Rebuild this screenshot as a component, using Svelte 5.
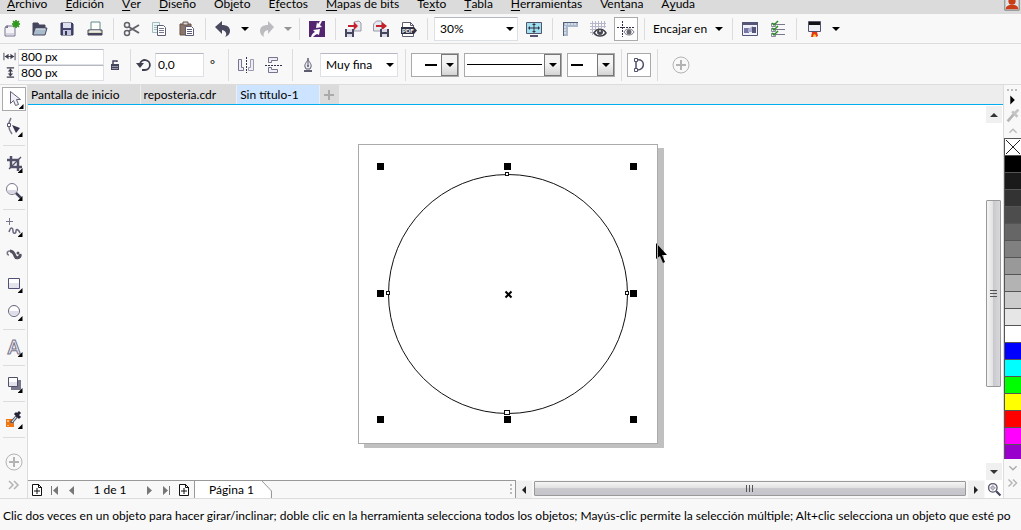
<script>
  let zoom = $state('30%')
  let outline = $state('Muy fina')
  let width = $state('800 px')
  let height = $state('800 px')
  let angle = $state('0,0')
  let tool = $state('pick')

  // label split around the underlined access key
  const menus = [
    ['', 'A', 'rchivo'],
    ['', 'E', 'dición'],
    ['', 'V', 'er'],
    ['', 'D', 'iseño'],
    ['Ob', 'j', 'eto'],
    ['E', 'f', 'ectos'],
    ['', 'M', 'apas de bits'],
    ['Te', 'x', 'to'],
    ['', 'T', 'abla'],
    ['', 'H', 'erramientas'],
    ['Ven', 't', 'ana'],
    ['A', 'y', 'uda'],
  ]

  const fileTools = [
    ['new', 'Nuevo'],
    ['open', 'Abrir'],
    ['save', 'Guardar'],
    ['print', 'Imprimir'],
    null,
    ['cut', 'Cortar'],
    ['copy', 'Copiar'],
    ['paste', 'Pegar'],
    null,
    ['undo', 'Deshacer', 'more'],
    ['redo', 'Rehacer', 'more off'],
    null,
    ['connect', 'Buscar contenido'],
    null,
    ['import', 'Importar'],
    ['export', 'Exportar'],
    ['pdf', 'Publicar en PDF'],
    null,
  ]

  const toolbox = [
    ['pick', 'Selección', true],
    ['shape', 'Forma', true],
    null,
    ['crop', 'Recortar', true],
    ['zoom', 'Zoom', true],
    null,
    ['freehand', 'Mano alzada', true],
    ['artistic', 'Medios artísticos', false],
    ['rect', 'Rectángulo', true],
    ['ellipse', 'Elipse', true],
    null,
    ['text', 'Texto', true],
    null,
    ['shadow', 'Sombra', true],
    null,
    ['dropper', 'Cuentagotas', true],
    null,
  ]

  const tabs = ['Pantalla de inicio', 'reposteria.cdr', 'Sin título-1']
  let activeTab = $state(2)

  const colors = [
    '#000000', '#1a1a1a', '#333333', '#4d4d4d', '#666666', '#808080', '#999999',
    '#b3b3b3', '#cccccc', '#e6e6e6', '#ffffff', '#0000ff', '#00ffff', '#00ff00',
    '#ffff00', '#ff0000', '#ff00ff', '#9900cc',
  ]

  const handles = [
    [22, 22], [149, 22], [275, 22],
    [22, 149], [275, 149],
    [22, 275], [149, 275], [275, 275],
  ]

  // every icon is drawn on a 20x20 grid
  const icons = {
    new: '<path d="M5 7h9v10H4V9z" fill="#f4f4f8" stroke="#77758c"/><path d="M4 9l3-3v3z" fill="#77758c"/><path d="M5 14h8v2H5z" fill="#d6d6e0"/><path d="M15 1l1 2 2-1-1 2 2 1-2 1 1 2-2-1-1 2-1-2-2 1 1-2-2-1 2-1-1-2 2 1z" fill="#2f9a1c" stroke="#2f9a1c"/>',
    open: '<path d="M4 16V4h5l1 2h6v3" fill="#46465f" stroke="#46465f"/><path d="M6 9h12l-2 7H4z" fill="#a9bccb" stroke="#46465f"/><path d="M7 10h9" stroke="#dce6ee"/>',
    save: '<path d="M4 4h11l1 1v11H4z" fill="#44446e" stroke="#343455"/><path d="M6 4h8v5H6z" fill="#dfe0f0"/><path d="M6 11h8v5H6z" fill="#c5c7dc"/><path d="M8 12h2v4H8z" fill="#343455"/>',
    print: '<path d="M6 3h9v8H6z" fill="#fff" stroke="#5e8c88"/><path d="M3 11h14v5H3z" fill="#dadbc4" stroke="#44445d"/><path d="M5 12h10" stroke="#fff"/><path d="M3 15h14" stroke="#44445d" stroke-width="2"/>',
    cut: '<path d="M8 8l10 6M8 12l10-6" fill="none" stroke="#62626b" stroke-width="2"/><circle cx="6" cy="6" r="2.5" fill="none" stroke="#62626b" stroke-width="1.5"/><circle cx="6" cy="14" r="2.5" fill="none" stroke="#62626b" stroke-width="1.5"/>',
    copy: '<path d="M3.500 3.500h7v10h-7z" fill="#edf5f5" stroke="#9ebdbd"/><path d="M5 6.500h4M5 8.500h4M5 10.500h4" stroke="#9ebdbd"/><path d="M8.500 6.500h6l2 2v8h-8z" fill="#fff" stroke="#5d5d77"/><path d="M10 9.500h5M10 11.500h5M10 13.500h5" stroke="#77778c"/>',
    paste: '<path d="M3 5h11v11H3z" fill="#8b7568" stroke="#665348"/><path d="M6 3h5v3H6z" fill="#d7d7dd" stroke="#665348"/><path d="M8.500 7.500h6l2 2v7h-8z" fill="#fff" stroke="#5d5d77"/><path d="M10 10.500h5M10 12.500h5M10 14.500h5" stroke="#5d5d77"/>',
    undo: '<path d="M9 2v4c5 0 8 2 8 6 0 3-2 5-5 6 2-2 2-6-3-7v4L2 8z" fill="#494960"/>',
    redo: '<path d="M12 2v4c-5 0-8 2-8 6 0 3 2 5 4 6-1-3 0-6 4-7v4l6-7z" fill="#bcbcc0"/>',
    connect: '<path d="M2 2h16v16H2z" fill="#53266f"/><path d="M13 2h2l-2 4 2 2-6 1 1-6 1 2z" fill="#fff"/><path d="M4 18c1-3 2-4 4-5L6 11l7-1-1 6-2-1c-2 1-3 2-4 3z" fill="#fff"/>',
    import: '<path d="M11 3l5-1 2 2v8h-7z" fill="#e8e8ef" stroke="#9898a8"/><path d="M5 6h6V3l4 4-4 4V8H5z" fill="#c3212c"/><path d="M2 10h9v8H2z" fill="#46465f"/><path d="M4 10h5v3H4zM4 15h5v3H4z" fill="#dadbe6"/>',
    export: '<path d="M2.500 5l3-3h5v10h-8z" fill="#e8e8ef" stroke="#9898a8"/><path d="M5 6h6V3l5 4-5 4V8H5z" fill="#c3212c"/><path d="M9 10h9v8H9z" fill="#46465f"/><path d="M11 10h5v3h-5zM11 15h5v3h-5z" fill="#dadbe6"/>',
    pdf: '<path d="M3.500 3.500h8l3 3v11h-11z" fill="#fff" stroke="#5d5d70"/><path d="M11.500 3v3.500H15" fill="none" stroke="#5d5d70"/><path d="M2 8h13l3 3.500-3 3.500H2z" fill="#303044"/><text x="3" y="14" font-size="6" font-weight="700" fill="#fff">PDF</text>',
    fit: '<path d="M2.500 3.500h15v11h-15z" fill="#9ee0ee" stroke="#555570"/><path d="M6 17h8" stroke="#555570" stroke-width="2"/><path d="M10 5v8M5 9h10" stroke="#303044"/><path d="M10 4l2 2H8zM10 14l2-2H8zM4 9l2-2v4zM16 9l-2-2v4z" fill="#303044"/>',
    ruler: '<path d="M3 3h15v5H8v9H3z" fill="#a9b8cd"/><path d="M3 3h15v1H4v13H3z" fill="#536077"/><path d="M6 4v2M9 4v2M12 4v2M15 4v2M4 8h2M4 11h2M4 14h2" stroke="#fff"/>',
    grid: '<path d="M4.500 2v14M7.500 2v14M10.500 2v14M13.500 2v7M16.500 2v7M2 4.500h16M2 7.500h16M2 10.500h7M2 13.500h7" stroke="#b6b6ca"/><path d="M6 14c3-5 9-5 12 0-3 4-9 4-12 0z" fill="#fff" stroke="#3e3e46" stroke-width="1.500"/><circle cx="12" cy="13" r="3" fill="#4a4a55"/><circle cx="12" cy="12" r="1" fill="#ddd"/>',
    guides: '<path d="M6.500 2v16M1 8.500h18" stroke="#30304e" stroke-dasharray="2 1"/><path d="M8 13c2-4 8-4 10 0-2 4-8 4-10 0z" fill="#fff" stroke="#777780"/><circle cx="13" cy="13" r="2.500" fill="#696974"/>',
    welcome: '<path d="M2.500 3.500h15v13h-15z" fill="#f0f0fa" stroke="#555577"/><path d="M2 3h16v3H2z" fill="#555577"/><path d="M4 9h5v5H4z" fill="#7777a5"/><path d="M8 10l5-3v6H8z" fill="#acacd0"/><path d="M12 8h4v6h-4z" fill="#555577"/>',
    options: '<path d="M8 5.500h9M8 10.500h9M8 15.500h9" stroke="#77778f"/><path d="M3.500 4.500h4v3h-4zM3.500 9.500h4v3h-4zM3.500 14.500h4v3h-4z" fill="#fff" stroke="#8888a0"/><path d="M4 4l2 2 4-4M4 9l2 2 4-4M4 14l2 2 4-4" fill="none" stroke="#2c8b26" stroke-width="1.500"/>',
    launch: '<path d="M4.500 2.500h12v10h-12z" fill="#ededf5" stroke="#53536f"/><path d="M5 3h11v3H5z" fill="#101014"/><path d="M7 18l1-5h5l1 4-2 1-1-2-2 2z" fill="#e83618"/><path d="M9 17l1-2 2 1-1 2z" fill="#ffcf20"/>',
    lock: '<path d="M6 9h8v6H6z" fill="#45455e"/><path d="M8 9V6h4v1" fill="none" stroke="#45455e" stroke-width="1.500"/><path d="M7 11.500h6M7 13.500h6" stroke="#9696a8"/>',
    rotate: '<path d="M6 9a5 5 0 1 1 5 6H8" fill="none" stroke="#3f3f50" stroke-width="1.800"/><path d="M2 8h8l-4 5z" fill="#3f3f50"/>',
    mirrorH: '<path d="M2.500 4.500h3v8h2v3h-5z" fill="#eeeef6" stroke="#77758c"/><path d="M17.500 4.500h-3v8h-2v3h5z" fill="#eeeef6" stroke="#9c9aad"/><path d="M10.500 2v16" stroke="#30304e" stroke-dasharray="2 1"/>',
    mirrorV: '<path d="M4.500 7.500v-5h9v3h-6v2z" fill="#eeeef6" stroke="#77758c"/><path d="M4.500 12.500v5h9v-3h-6v-2z" fill="#eeeef6" stroke="#77758c"/><path d="M1 10.500h18" stroke="#30304e" stroke-dasharray="2 1"/>',
    pen: '<path d="M10 3c0 4 4 5 3 9l-1 2H8l-1-2c-1-4 3-5 3-9z" fill="#e9e9f2" stroke="#5d5d70"/><path d="M10 5v6" stroke="#5d5d70"/><circle cx="10" cy="11" r="1" fill="#5d5d70"/><path d="M6 16h8" stroke="#5d5d70" stroke-width="2"/>',
    curve: '<path d="M7 5v10M8 5c8-2 9 10 0 10" fill="none" stroke="#505068" stroke-width="1.500"/><path d="M5.500 3.500h3v3h-3zM5.500 13.500h3v3h-3z" fill="#fff" stroke="#505068"/>',
    plus: '<circle cx="10" cy="10" r="8" fill="none" stroke="#b3b3b3"/><path d="M10 5v10M5 10h10" stroke="#b3b3b3" stroke-width="2"/>',
    pick: '<path d="M6.500 2.500v12l3-3 2 5 3-1-2-5h4z" fill="#f0f0f6" stroke="#626278"/>',
    shape: '<path d="M7 1C4 6 4 12 8 17" fill="none" stroke="#77778c" stroke-width="1.500"/><path d="M3.500 6.500h3v3h-3z" fill="#fff" stroke="#555570"/><path d="M8 8l8 3-4 5z" fill="#34344c"/>',
    crop: '<path d="M7 3v11h11M3 7h11v11" fill="none" stroke="#505068" stroke-width="2.500"/><path d="M5 16L17 4" stroke="#505068" stroke-width="1.200"/>',
    zoom: '<circle cx="8" cy="8" r="5.500" fill="#fff" stroke="#77778c"/><path d="M3 9h10c-1 5-9 5-10 0z" fill="#d8d8e4"/><path d="M12 12l5 5" stroke="#45455e" stroke-width="2.500"/>',
    freehand: '<path d="M5.500 1v7M2 4.500h7" stroke="#77778c"/><path d="M5 15c2-6 4-4 4-1s3 3 3 0 3-1 4 2" fill="none" stroke="#66667c" stroke-width="1.500"/>',
    artistic: '<path d="M6 6c3 0 4 2 5 5s6 2 5-2" fill="none" stroke="#505060" stroke-width="3"/><circle cx="14" cy="8" r="1.500" fill="#505060"/><path d="M6 6c-4 0-3 4-1 4" fill="none" stroke="#77778a" stroke-width="1.500"/>',
    rect: '<path d="M4.500 5.500h11v10h-11z" fill="#fff" stroke="#505078"/><path d="M5 10h10v5H5z" fill="#e3e3ec"/>',
    ellipse: '<circle cx="10" cy="10" r="5.500" fill="#fff" stroke="#626278"/><path d="M5 10h10c-1 6-9 6-10 0z" fill="#dedee9"/>',
    text: '<text x="10" y="17" text-anchor="middle" font-size="18" font-weight="700" fill="#ededf5" stroke="#77758c">A</text>',
    shadow: '<path d="M7 7h10v10H7z" fill="#78788d"/><path d="M4.500 4.500h9v9h-9z" fill="#fff" stroke="#505068"/><path d="M5 9h8v4H5z" fill="#e3e3ec"/>',
    dropper: '<path d="M2 10h8v8H2z" fill="#ef7612"/><path d="M3 11h2v2H3zM7 13h2v2H7zM3 16h2v1H3z" fill="#ffc080"/><path d="M7 14l7-8" stroke="#555568" stroke-width="3"/><path d="M8 13l4-5" stroke="#dceaf0" stroke-width="1.200"/><path d="M11 4l5 5M13 6l3-3" stroke="#252537" stroke-width="3"/>',
    loupe: '<circle cx="8" cy="8" r="5" fill="#fff" stroke="#505068" stroke-width="1.500"/><circle cx="8" cy="8" r="2" fill="none" stroke="#77778c"/><path d="M8 3v10M3 8h10" stroke="#aaaab8"/><path d="M12 12l5 5" stroke="#45455e" stroke-width="2.500"/>',
    addPage: '<path d="M5.500 4.500h6l3 3v8h-9z" fill="#fff" stroke="#111"/><path d="M11.500 4v3.500H15M7 11h6M10 8v6" fill="none" stroke="#111"/>',
    first: '<path d="M7.500 6v9" stroke="#777" /><path d="M14 6v9l-5-4.500z" fill="#777"/>',
    prev: '<path d="M13 6v9l-5-4.500z" fill="#777"/>',
    next: '<path d="M7 6v9l5-4.500z" fill="#777"/>',
    last: '<path d="M12.500 6v9" stroke="#777" /><path d="M6 6v9l5-4.500z" fill="#777"/>',
    up: '<path d="M6 12l4-4 4 4z" fill="#333"/>',
    down: '<path d="M6 8l4 4 4-4z" fill="#333"/>',
    left: '<path d="M12 6l-4 4 4 4z" fill="#222"/>',
    right: '<path d="M8 6l4 4-4 4z" fill="#222"/>',
    flyout: '<path d="M7 5v10l5-5z" fill="#000"/>',
    grayDropper: '<path d="M4 17l8-9" stroke="#b5b5b5" stroke-width="3"/><path d="M9 6l6 6M12 8l4-4" stroke="#c4c4c4" stroke-width="3"/>',
    chevUp: '<path d="M6 12l4-4 4 4" fill="none" stroke="#bbb" stroke-width="1.500"/>',
    chevDown: '<path d="M6 8l4 4 4-4" fill="none" stroke="#aaa" stroke-width="1.500"/>',
    expand: '<path d="M5 6l4 4-4 4M10 6l4 4-4 4" fill="none" stroke="#b3b3b3" stroke-width="1.500"/>',
    user: '<path d="M2 2h16v16H2z" fill="#dfe3e8" stroke="#777"/><circle cx="10" cy="8" r="4" fill="#c93e16"/><path d="M3 17c0-4 4-5 7-5s7 1 7 5z" fill="#c93e16"/>',
  }
</script>

{#snippet icon(name)}
  <svg class="icon" viewBox="0 0 20 20" aria-hidden="true">{@html icons[name]}</svg>
{/snippet}

{#snippet caret()}
  <svg class="caret" viewBox="0 0 8 4" aria-hidden="true"><path d="M0 0h8L4 4z" /></svg>
{/snippet}

<div class="app">
  <nav class="menubar">
    {#each menus as [before, key, after]}
      <button class="menu">{before}<u>{key}</u>{after}</button>
    {/each}
    <button class="user" aria-label="Cuenta">{@render icon('user')}</button>
  </nav>

  <div class="bar standard">
    {#each fileTools as item}
      {#if item}
        <button class="tool" aria-label={item[1]}>{@render icon(item[0])}</button>
        {#if item[2]}
          <button class="drop {item[2]}" aria-label="{item[1]}: lista">{@render caret()}</button>
        {/if}
      {:else}
        <span class="sep"></span>
      {/if}
    {/each}
    <div class="combo zoom">
      <select bind:value={zoom} aria-label="Niveles de zoom">
        <option>30%</option>
        <option>50%</option>
        <option>100%</option>
      </select>
      {@render caret()}
    </div>
    <button class="tool" aria-label="Vista previa a pantalla completa">{@render icon('fit')}</button>
    <span class="sep"></span>
    <button class="tool" aria-label="Mostrar reglas">{@render icon('ruler')}</button>
    <button class="tool" aria-label="Mostrar cuadrícula">{@render icon('grid')}</button>
    <button class="tool boxed" aria-label="Mostrar líneas guía">{@render icon('guides')}</button>
    <span class="sep"></span>
    <button class="snap">Encajar en {@render caret()}</button>
    <span class="sep"></span>
    <button class="tool" aria-label="Pantalla de bienvenida">{@render icon('welcome')}</button>
    <button class="tool" aria-label="Opciones">{@render icon('options')}</button>
    <span class="sep"></span>
    <button class="tool" aria-label="Iniciador">{@render icon('launch')}</button>
    <button class="drop" aria-label="Iniciador: lista">{@render caret()}</button>
  </div>

  <div class="bar property">
    <div class="size">
      <label for="obj-w" aria-label="Ancho">
        <svg viewBox="0 0 14 10"><path d="M1 1v8M13 1v8M2 5h10" stroke="#3f3f50" fill="none" /><path d="M2 5l4-3v6zM12 5L8 2v6z" fill="#3f3f50" /></svg>
      </label>
      <input id="obj-w" bind:value={width} />
      <label for="obj-h" aria-label="Alto">
        <svg viewBox="0 0 14 12"><path d="M4 1h8M4 11h8M8 2v8" stroke="#3f3f50" stroke-width="1.5" fill="none" /><path d="M8 2l3 3H5zM8 10l3-3H5z" fill="#3f3f50" /></svg>
      </label>
      <input id="obj-h" bind:value={height} />
    </div>
    <button class="tool" aria-label="Bloquear proporción">{@render icon('lock')}</button>
    <span class="sep"></span>
    <label class="angle">
      {@render icon('rotate')}
      <input bind:value={angle} aria-label="Ángulo de giro" />
      <span>°</span>
    </label>
    <span class="sep"></span>
    <button class="tool" aria-label="Reflejar horizontalmente">{@render icon('mirrorH')}</button>
    <button class="tool" aria-label="Reflejar verticalmente">{@render icon('mirrorV')}</button>
    <span class="sep"></span>
    <label class="pen" for="outline" aria-label="Anchura de contorno">{@render icon('pen')}</label>
    <div class="combo outline">
      <select id="outline" bind:value={outline}>
        <option>Muy fina</option>
        <option>0,5 px</option>
        <option>1,0 px</option>
      </select>
      {@render caret()}
    </div>
    <span class="sep"></span>
    <div class="pickers">
      <button class="picker right" aria-label="Punta inicial"><i></i><b>{@render caret()}</b></button>
      <button class="picker long" aria-label="Estilo de línea"><i></i><b>{@render caret()}</b></button>
      <button class="picker" aria-label="Punta final"><i></i><b>{@render caret()}</b></button>
    </div>
    <span class="sep"></span>
    <button class="tool boxed" aria-label="Cerrar curva">{@render icon('curve')}</button>
    <span class="sep"></span>
    <button class="tool add" aria-label="Personalizar">{@render icon('plus')}</button>
  </div>

  <div class="body">
    <aside class="toolbox">
      {#each toolbox as item}
        {#if item}
          <button
            class="tool"
            class:boxed={tool === item[0]}
            class:fly={item[2]}
            aria-label={item[1]}
            onclick={() => tool = item[0]}
          >{@render icon(item[0])}</button>
        {:else}
          <span class="rule"></span>
        {/if}
      {/each}
      <button class="tool custom" aria-label="Personalizar">{@render icon('plus')}</button>
      <button class="tool expand" aria-label="Más herramientas">{@render icon('expand')}</button>
    </aside>

    <main>
      <div class="tabs">
        {#each tabs as tab, i}
          <button class="tab" class:active={i === activeTab} onclick={() => activeTab = i}>{tab}</button>
        {/each}
        <button class="tab-add" aria-label="Nuevo documento">
          <svg viewBox="0 0 12 12"><path d="M6 1v10M1 6h10" stroke="#aaa" stroke-width="2" /></svg>
        </button>
      </div>

      <div class="view">
        <div class="canvas">
          <svg class="paper" viewBox="0 0 300 300">
            <circle cx="150" cy="150" r="119.5" fill="none" stroke="#111" />
            {#each handles as [x, y]}
              <rect x={x - 3} y={y - 3} width="7" height="7" />
            {/each}
            <g fill="#fff" stroke="#111">
              <rect x="147.5" y="28.5" width="3" height="3" />
              <rect x="28.5" y="147.5" width="3" height="3" />
              <rect x="267.5" y="147.5" width="3" height="3" />
              <rect x="146.5" y="266.5" width="5" height="4" />
            </g>
            <path d="M147.500 147.500l6 6M153.500 147.500l-6 6" stroke="#000" stroke-width="2" />
            <path d="M298 99v16l4-3 3 7 2-1-3-7h5z" />
          </svg>
        </div>
        <div class="vscroll">
          <button class="arrow" aria-label="Arriba">{@render icon('up')}</button>
          <div class="track"><div class="thumb"><i></i></div></div>
          <button class="arrow" aria-label="Abajo">{@render icon('down')}</button>
        </div>
      </div>

      <div class="pages">
        <div class="pager">
          <button aria-label="Añadir página antes">{@render icon('addPage')}</button>
          <button aria-label="Primera página">{@render icon('first')}</button>
          <button aria-label="Página anterior">{@render icon('prev')}</button>
          <span class="count">1 de 1</span>
          <button aria-label="Página siguiente">{@render icon('next')}</button>
          <button aria-label="Última página">{@render icon('last')}</button>
          <button aria-label="Añadir página después">{@render icon('addPage')}</button>
          <button class="page-tab">Página 1</button>
          <svg class="slant" viewBox="0 0 10 17"><path d="M0 0l8 9v8H0z" fill="#fff" /><path d="M0 0l9.500 10v7" fill="none" stroke="#999" /></svg>
          <span class="grip"></span>
        </div>
        <div class="hscroll">
          <button class="arrow" aria-label="Izquierda">{@render icon('left')}</button>
          <div class="thumb"><i></i></div>
          <button class="arrow" aria-label="Derecha">{@render icon('right')}</button>
        </div>
        <button class="loupe" aria-label="Navegador">{@render icon('loupe')}</button>
      </div>
    </main>

    <aside class="palette">
      <span class="dots"></span>
      <button class="flyout" aria-label="Menú de paleta">{@render icon('flyout')}</button>
      <button class="eyedrop" aria-label="Muestrear color">{@render icon('grayDropper')}</button>
      <button aria-label="Subir">{@render icon('chevUp')}</button>
      <div class="swatches">
        <button class="swatch none" aria-label="Sin color">
          <svg viewBox="0 0 16 16"><path d="M1 1l14 14M15 1L1 15" stroke="#222" /></svg>
        </button>
        {#each colors as color}
          <button class="swatch" style="background: {color}" aria-label={color}></button>
        {/each}
      </div>
      <button aria-label="Bajar">{@render icon('chevDown')}</button>
      <button aria-label="Expandir paleta">{@render icon('expand')}</button>
    </aside>
  </div>

  <footer>Clic dos veces en un objeto para hacer girar/inclinar; doble clic en la herramienta selecciona todos los objetos; Mayús-clic permite la selección múltiple; Alt+clic selecciona un objeto que esté po</footer>
</div>

<style>
  :global(body) { margin: 0; }

  .app {
    display: flex;
    flex-direction: column;
    height: 100vh;
    overflow: hidden;
    background: #f8f8f8;
    color: #000;
    font: 12px/16px "Segoe UI", Lato, "Open Sans", sans-serif;
  }
  .app * { box-sizing: border-box; }

  button, input, select { font: inherit; color: inherit; }
  button {
    display: flex;
    align-items: center;
    justify-content: center;
    flex: none;
    background: none;
    border: 0;
    padding: 0;
  }
  svg { display: block; flex: none; }
  .icon { width: 20px; height: 20px; }
  .caret { width: 8px; height: 4px; }

  .menubar {
    display: flex;
    flex: none;
    align-items: flex-end;
    height: 14px;
    padding: 0 0 2px 7px;
    gap: 18px;
    background: #dbdbdb;
  }
  .menu { height: 16px; white-space: nowrap; }
  .menu u { text-underline-offset: 2px; }
  .user { margin-left: auto; }
  .user .icon { width: 18px; height: 18px; }

  .bar {
    display: flex;
    flex: none;
    align-items: center;
    border-bottom: 1px solid #dcdcdc;
  }
  .standard { height: 30px; margin-left: -3px; }
  .property { height: 41px; padding: 1px 0 0 3px; }

  .tool { width: 28px; height: 28px; }
  .boxed {
    width: 24px;
    height: 24px;
    margin: 2px;
    background: #fff;
    border: 1px solid #aaa;
  }
  .drop { width: 15px; height: 28px; }
  .off { opacity: 0.4; }
  .sep {
    flex: none;
    width: 8px;
    height: 22px;
    background: linear-gradient(#dcdcdc, #dcdcdc) center / 1px 100% no-repeat;
  }
  .property .sep { height: 32px; }

  .combo { position: relative; flex: none; height: 24px; }
  .combo select {
    appearance: none;
    width: 100%;
    height: 100%;
    padding: 0 20px 0 5px;
    background: #fff;
    border: 1px solid #dde0e4;
    border-top-color: #b5b8c0;
    border-radius: 0;
  }
  .combo .caret { position: absolute; right: 4px; top: 10px; pointer-events: none; }
  .zoom { width: 84px; margin: 0 2px 0 3px; }
  .outline { width: 78px; margin-right: 3px; }

  .snap { width: 80px; height: 28px; gap: 8px; }

  input {
    min-width: 0;
    padding: 0 2px;
    background: #fff;
    border: 1px solid #dde0e4;
    border-top-color: #b5b8c0;
  }
  .size {
    display: grid;
    grid-template-columns: 15px 86px;
    grid-auto-rows: 16px;
    align-items: center;
  }
  .size input { height: 16px; line-height: 14px; }
  .size svg { width: 13px; height: 11px; }
  .size + .tool { width: 22px; }
  .angle { display: flex; align-items: center; flex: none; width: 90px; }
  .angle .icon { margin-right: 1px; }
  .angle input { width: 49px; height: 24px; }
  .angle span { margin-left: 6px; }
  .pen { width: 24px; padding-left: 2px; }

  .pickers { display: flex; gap: 5px; margin: 0 2px; }
  .picker {
    width: 48px;
    height: 24px;
    background: #fff;
    border: 1px solid #aaa;
  }
  .picker.long { width: 98px; }
  .picker i { width: 12px; height: 2px; margin: 0 auto 0 3px; background: #000; }
  .picker.right i { margin: 0 4px 0 auto; }
  .picker.long i { flex: 1; height: 1px; margin: 0 2px; }
  .picker b {
    display: grid;
    place-items: center;
    width: 17px;
    height: 22px;
    border: 1px solid #777;
    background: linear-gradient(#f4f4f4 45%, #d4d4d4);
  }
  .add { margin-left: 6px; }

  .body { display: flex; flex: 1; min-height: 0; }

  .toolbox {
    display: flex;
    flex-direction: column;
    flex: none;
    align-items: center;
    width: 28px;
    border-right: 1px solid #dcdcdc;
  }
  .fly { position: relative; }
  .fly::after {
    content: '';
    position: absolute;
    right: 5px;
    bottom: 4px;
    width: 5px;
    height: 5px;
    background: #000;
    clip-path: polygon(100% 0, 100% 100%, 0 100%);
  }
  .fly.boxed::after { right: 1px; bottom: 1px; }
  .rule {
    flex: none;
    width: 22px;
    height: 8px;
    background: linear-gradient(#dcdcdc, #dcdcdc) center / 100% 1px no-repeat;
  }
  .custom { margin-top: 7px; }
  .expand { height: 18px; }

  main { display: flex; flex: 1; flex-direction: column; min-width: 0; }

  .tabs {
    display: flex;
    flex: none;
    height: 20px;
    border-bottom: 1px solid #00aeef;
    background: #ededed;
  }
  .tab {
    padding: 0 20px 0 3px;
    background: #dbdbdb;
    border-right: 1px solid #ededed;
  }
  .tab.active { background: #cce4ff; }
  .tab-add { width: 19px; background: #dbdbdb; }
  .tab-add svg { width: 12px; height: 12px; }

  .view { display: flex; flex: 1; min-height: 0; background: #fff; }
  .canvas { display: grid; flex: 1; place-items: center; min-width: 0; padding: 2px 0 0 2px; }
  .paper {
    width: 300px;
    height: 300px;
    overflow: visible;
    background: #fff;
    outline: 1px solid #aaa;
    outline-offset: -1px;
    box-shadow: 6px 4px #c0c0c0;
  }

  .vscroll { display: flex; flex: none; flex-direction: column; width: 18px; padding: 1px 1px 0; }
  .arrow { width: 16px; height: 17px; background: #f0f0f0; }
  .track { flex: 1; padding-top: 77px; }
  .thumb {
    display: grid;
    place-items: center;
    border: 1px solid #999;
    border-radius: 1px;
    background: linear-gradient(#f5f5f5, #e2e2e4 45%, #c9c9ce 50%, #c4c4ca);
  }
  .vscroll .thumb { width: 15px; height: 187px; background: linear-gradient(90deg, #f5f5f5, #e2e2e4 45%, #c9c9ce 50%, #d8d8dc); }
  .thumb i { width: 7px; height: 7px; background: repeating-linear-gradient(90deg, #555 0 1px, transparent 1px 3px); }
  .vscroll .thumb i { background: repeating-linear-gradient(#555 0 1px, transparent 1px 3px); }

  .pages { display: flex; flex: none; height: 18px; }
  .pager {
    display: flex;
    flex: none;
    align-items: center;
    width: 50%;
    border-top: 1px solid #999;
    border-right: 1px solid #999;
  }
  .pager button { width: 17px; height: 17px; }
  .count { width: 62px; text-align: center; }
  .pager .page-tab {
    width: 68px;
    margin-left: 2px;
    padding-left: 6px;
    background: #fff;
    border-left: 1px solid #999;
  }
  .slant { width: 10px; height: 17px; }
  .grip { width: 2px; height: 11px; margin: 0 3px 0 auto; background: repeating-linear-gradient(#bbb 0 2px, transparent 2px 4px); }
  .hscroll { display: flex; flex: 1; min-width: 0; padding: 1px 1px 0 0; gap: 2px; }
  .hscroll .thumb { flex: 1; height: 15px; }
  .loupe { width: 18px; background: #fff; }
  .loupe .icon { width: 17px; height: 17px; }

  .palette {
    display: flex;
    flex: none;
    flex-direction: column;
    width: 18px;
    border-left: 1px solid #dcdcdc;
  }
  .palette > button { height: 15px; }
  .palette .icon { width: 18px; height: 18px; }
  .dots { height: 9px; margin: 0 3px; background: repeating-linear-gradient(90deg, #bbb 0 2px, transparent 2px 4px) bottom 3px left 0 / 100% 2px no-repeat; }
  .palette > .flyout { height: 12px; }
  .palette > .eyedrop { height: 17px; }
  .swatches {
    flex: 1;
    min-height: 0;
    margin-bottom: 1px;
    overflow: hidden;
    border-left: 1px solid #555;
  }
  .swatch { width: 100%; height: 17px; border-top: 1px solid #555; }
  .swatch.none { background: #fff; }
  .swatch svg { width: 16px; height: 16px; }
  .palette > button:last-child { margin-bottom: 8px; }

  footer {
    flex: none;
    height: 32px;
    padding: 9px 3px 0;
    overflow: hidden;
    white-space: nowrap;
    border-top: 1px solid #dcdcdc;
  }
</style>
